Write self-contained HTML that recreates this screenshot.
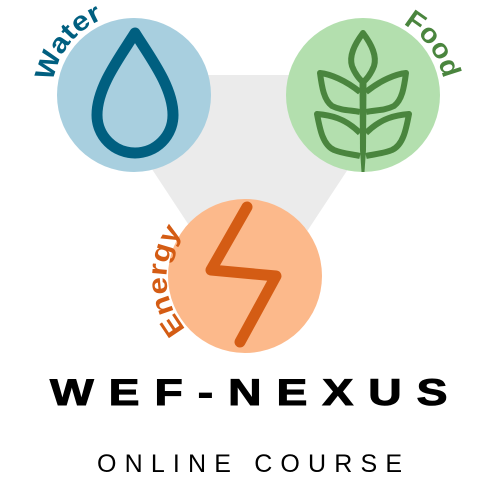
<!DOCTYPE html>
<html><head><meta charset="utf-8"><style>html,body{margin:0;padding:0;background:#fff;width:500px;height:500px;overflow:hidden}</style></head><body>
<svg width="500" height="500" viewBox="0 0 500 500" xmlns="http://www.w3.org/2000/svg">
<defs>
<path id="pw" d="M53,82 A82,82 0 0 1 130,13"/>
<path id="pf" d="M403,24 A82,82 0 0 1 445,97"/>
<path id="pe" d="M186,329 A78,78 0 0 1 181,232"/>
</defs>
<polygon points="90,75 410,75 250,318" fill="#ebebeb"/>
<circle cx="134" cy="95" r="77" fill="#a8cfdf"/>
<circle cx="363" cy="95" r="77" fill="#b3dfae"/>
<circle cx="245" cy="276" r="77" fill="#fcb98b"/>
<path d="M135,33 C120,57 97,87 97,115 A38,38 0 0 0 173,115 C173,87 150,57 135,33Z" fill="none" stroke="#005f80" stroke-width="11" stroke-linejoin="round"/>
<polyline points="247,207 211,270 276,276 240,342" fill="none" stroke="#d45c14" stroke-width="11" stroke-linecap="round" stroke-linejoin="round"/>
<g fill="none" stroke="#4a853e" stroke-width="6" stroke-linejoin="round">
<path d="M363,33 C354,45 349,56 352,66 C355,74 360,80 363,82 C366,80 371,74 374,66 C377,56 372,45 363,33Z"/>
<path d="M360,92 C345,80 330,74 320,73 C322,88 324,100 332,106 C342,111 352,110 360,112"/>
<path d="M366,92 C381,80 396,74 406,73 C404,88 402,100 394,106 C384,111 374,110 366,112"/>
<path d="M360,133 C345,118 330,115 317,114 C320,130 323,145 334,150 C344,154 352,154 360,156"/>
<path d="M366,133 C381,118 396,115 409,114 C406,130 403,145 392,150 C382,154 374,154 366,156"/>
</g>
<path d="M359.5,82 L366.5,82 L366,150 L364.5,172 L361.5,172 L360,150Z" fill="#4a853e"/>
<g font-family="Liberation Sans, sans-serif" font-weight="bold" font-size="27">
<text fill="#005f80"><textPath href="#pw" textLength="84" lengthAdjust="spacingAndGlyphs">Water</textPath></text>
<text fill="#4a853e"><textPath href="#pf" textLength="70" lengthAdjust="spacingAndGlyphs">Food</textPath></text>
<text fill="#d45c14"><textPath href="#pe" textLength="106" lengthAdjust="spacingAndGlyphs">Energy</textPath></text>
</g>
<text x="40" y="405" font-family="Liberation Sans, sans-serif" font-weight="bold" font-size="37" textLength="318" lengthAdjust="spacing" fill="#000" stroke="#000" stroke-width="1" transform="scale(1.25 1)">WEF-NEXUS</text>
<text x="97" y="472" font-family="Liberation Sans, sans-serif" font-size="25" textLength="305" lengthAdjust="spacing" fill="#000">ONLINE COURSE</text>
</svg>
</body></html>
